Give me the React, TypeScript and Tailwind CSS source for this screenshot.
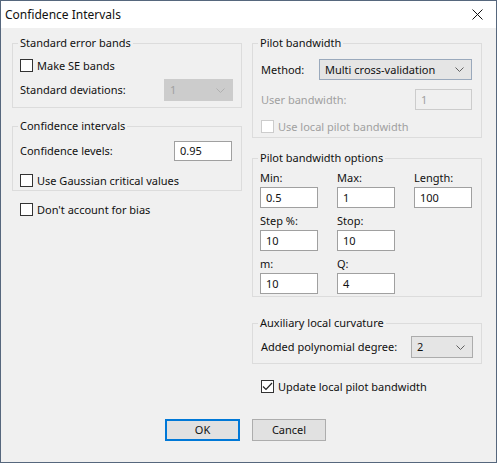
import React from "react";

const font = { fontFamily: '"Noto Sans", "Open Sans", sans-serif' };

function Check({ checked = false, disabled = false }: { checked?: boolean; disabled?: boolean }) {
  return (
    <span
      className={
        "flex h-[13px] w-[13px] shrink-0 items-center justify-center border bg-white " +
        (disabled ? "border-[#cccccc]" : "border-[#333333]")
      }
    >
      {checked && (
        <svg width="11" height="11" viewBox="0 0 11 11">
          <polyline points="1,5.5 4,8.5 10,2" fill="none" stroke="#222" strokeWidth="1.2" />
        </svg>
      )}
    </span>
  );
}

function CheckRow({ label, checked, disabled }: { label: string; checked?: boolean; disabled?: boolean }) {
  return (
    <div className="flex h-[13px] items-center gap-[4px]">
      <Check checked={checked} disabled={disabled} />
      <span className={"leading-[16px] " + (disabled ? "text-[#a0a0a0]" : "text-[#111]")}>{label}</span>
    </div>
  );
}

function Chevron({ color = "#606060" }: { color?: string }) {
  return (
    <svg width="9" height="5" viewBox="0 0 9 5">
      <polyline points="0.5,0.5 4.5,4.5 8.5,0.5" fill="none" stroke={color} strokeWidth="1" />
    </svg>
  );
}

function Group({ title, className, children }: { title: string; className: string; children: React.ReactNode }) {
  return (
    <div className={"relative border border-[#dcdcdc] " + className}>
      <span className="absolute left-[5px] top-[-9px] bg-[#f0f0f0] px-[2px] leading-[16px]">{title}</span>
      {children}
    </div>
  );
}

function Field({ value, w = "w-[58px]", h = "h-[21px]" }: { value: string; w?: string; h?: string }) {
  return (
    <div className={"flex items-center border border-[#a0a0a0] bg-white pl-[5px] leading-[16px] " + w + " " + h}>
      {value}
    </div>
  );
}

export default function App() {
  return (
    <div
      className="flex h-[463px] w-[497px] flex-col border border-[#56677d] text-[11px] text-[#111]"
      style={font}
    >
      <div className="flex h-[27px] shrink-0 items-center justify-between bg-white pl-[4px] pr-[13px]">
        <span className="text-[12px] leading-[16px]">Confidence Intervals</span>
        <svg width="11" height="11" viewBox="0 0 11 11">
          <path d="M0.5 0.5 L10.5 10.5 M10.5 0.5 L0.5 10.5" stroke="#111" strokeWidth="1" fill="none" />
        </svg>
      </div>
      <div className="flex flex-1 flex-col bg-[#f0f0f0]">
        <div className="flex gap-[10px] pl-[11px] pt-[15px]">
          {/* Left column */}
          <div className="flex w-[230px] flex-col">
            <Group title="Standard error bands" className="h-[65px] pl-[7px] pr-[8px] pt-[15px]">
              <CheckRow label="Make SE bands" />
              <div className="mt-[7px] flex items-center justify-between">
                <span className="leading-[16px]">Standard deviations:</span>
                <div className="flex h-[22px] w-[69px] items-center justify-between border border-[#cccccc] bg-[#cccccc] pl-[5px] pr-[7px] text-[#a0a0a0]">
                  <span className="leading-[16px]">1</span>
                  <Chevron color="#b0b0b0" />
                </div>
              </div>
            </Group>
            <Group title="Confidence intervals" className="mt-[18px] h-[65px] pl-[7px] pr-[9px] pt-[14px]">
              <div className="flex items-center justify-between">
                <span className="leading-[16px]">Confidence levels:</span>
                <Field value="0.95" h="h-[20px]" />
              </div>
              <div className="mt-[13px]">
                <CheckRow label="Use Gaussian critical values" />
              </div>
            </Group>
            <div className="ml-[8px] mt-[12px]">
              <CheckRow label="Don't account for bias" />
            </div>
          </div>

          {/* Right column */}
          <div className="flex w-[230px] flex-col">
            <Group title="Pilot bandwidth" className="h-[95px] pl-[8px] pr-[9px] pt-[15px]">
              <div className="flex items-center justify-between">
                <span className="leading-[16px]">Method:</span>
                <div className="flex h-[21px] w-[153px] items-center justify-between border border-[#9aa9bc] bg-[#e5e5e5] pl-[5px] pr-[7px]">
                  <span className="leading-[16px]">Multi cross-validation</span>
                  <Chevron />
                </div>
              </div>
              <div className="mt-[9px] flex items-center justify-between">
                <span className="leading-[16px] text-[#a0a0a0]">User bandwidth:</span>
                <div className="flex h-[21px] w-[57px] items-center border border-[#cccccc] bg-[#f0f0f0] pl-[5px] leading-[16px] text-[#a0a0a0]">
                  1
                </div>
              </div>
              <div className="mt-[10px]">
                <CheckRow label="Use local pilot bandwidth" disabled />
              </div>
            </Group>

            <Group title="Pilot bandwidth options" className="mt-[20px] h-[139px] pl-[7px] pt-[11px]">
              <div className="grid grid-cols-[77px_77px_77px] gap-y-[5px]">
                {[
                  ["Min:", "0.5"],
                  ["Max:", "1"],
                  ["Length:", "100"],
                  ["Step %:", "10"],
                  ["Stop:", "10"],
                  null,
                  ["m:", "10"],
                  ["Q:", "4"],
                  null,
                ].map((c, i) =>
                  c ? (
                    <div key={i} className="flex flex-col">
                      <span className="h-[16px] leading-[16px]">{c[0]}</span>
                      <div className="mt-[1px]">
                        <Field value={c[1]} />
                      </div>
                    </div>
                  ) : (
                    <div key={i} />
                  )
                )}
              </div>
            </Group>

            <Group title="Auxiliary local curvature" className="mt-[26px] h-[41px] pl-[8px] pr-[8px] pt-[12px]">
              <div className="flex items-center justify-between">
                <span className="leading-[16px]">Added polynomial degree:</span>
                <div className="flex h-[22px] w-[62px] items-center justify-between border border-[#acacac] bg-[#e5e5e5] pl-[5px] pr-[7px]">
                  <span className="leading-[16px]">2</span>
                  <Chevron />
                </div>
              </div>
            </Group>

            <div className="ml-[9px] mt-[16px]">
              <CheckRow label="Update local pilot bandwidth" checked />
            </div>
          </div>
        </div>

        <div className="mt-[26px] flex gap-[12px] pl-[164px]">
          <button className="flex h-[22px] w-[75px] items-center justify-center border-2 border-[#0078d7] bg-[#e1e1e1] leading-[16px]">
            OK
          </button>
          <button className="flex h-[22px] w-[74px] items-center justify-center border border-[#adadad] bg-[#e1e1e1] leading-[16px]">
            Cancel
          </button>
        </div>
      </div>
    </div>
  );
}
